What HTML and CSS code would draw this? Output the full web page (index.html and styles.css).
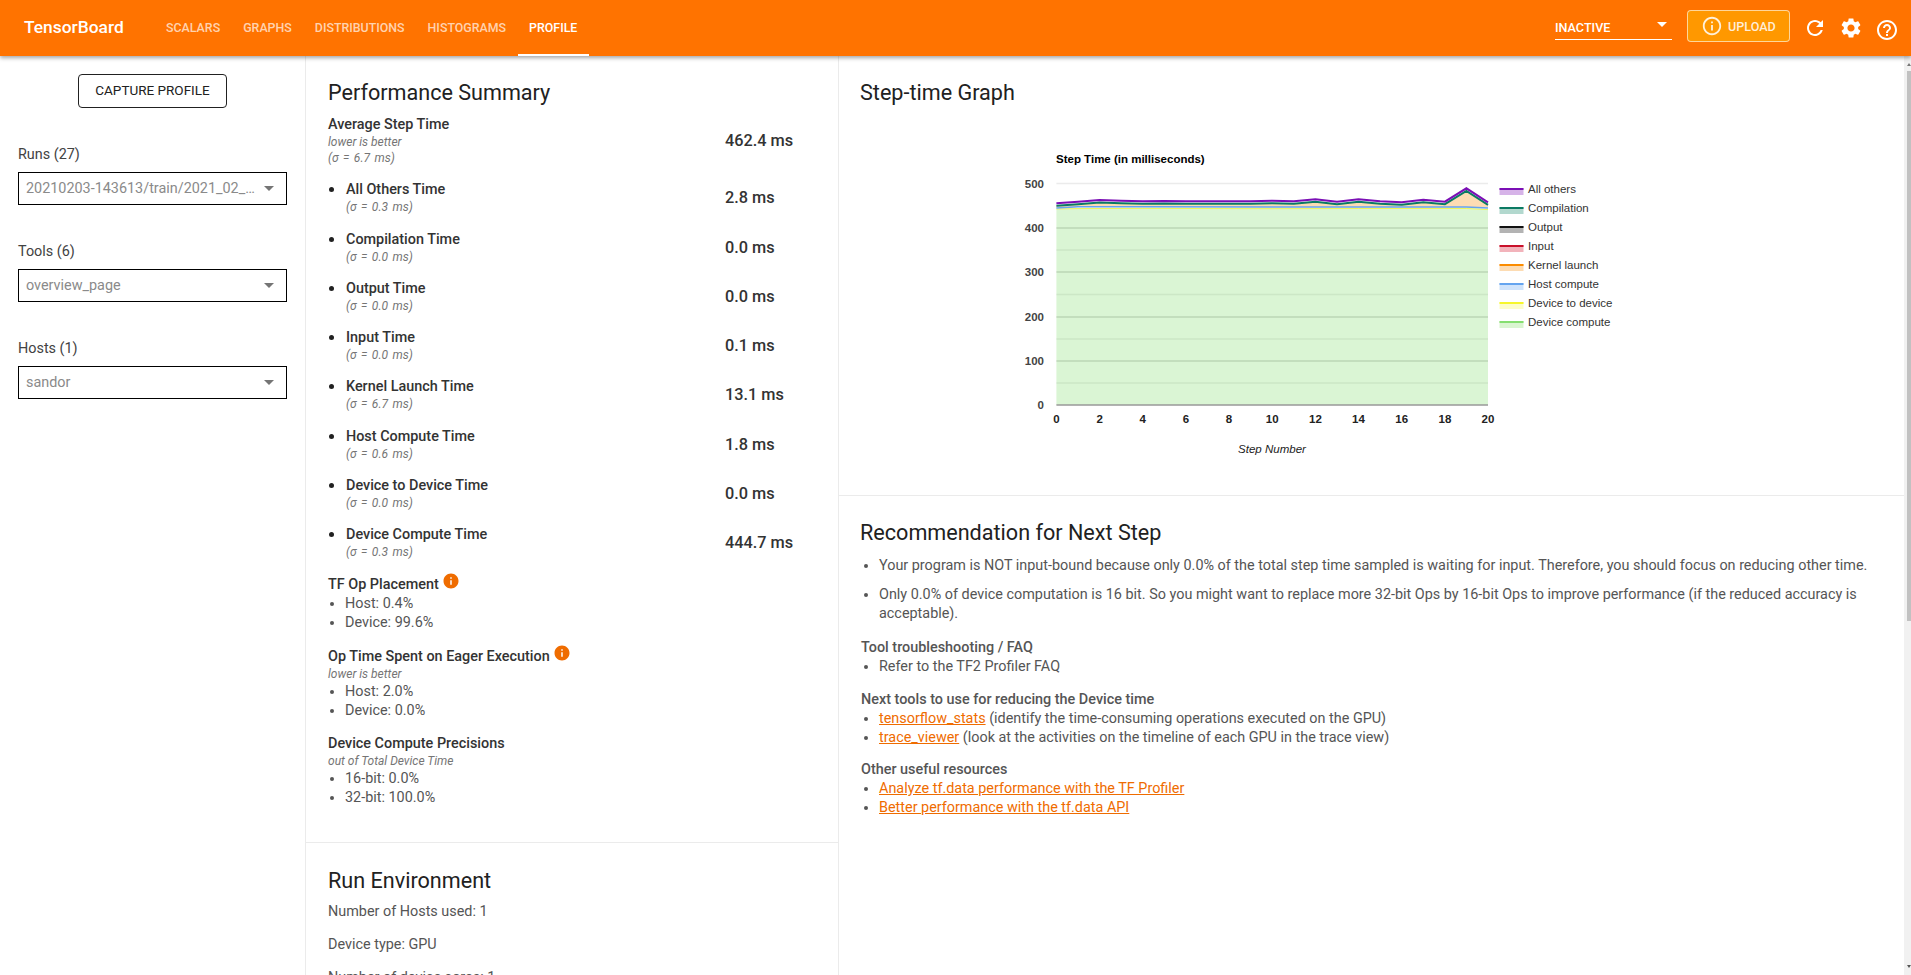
FILE: index.html
```html
<!DOCTYPE html>
<html>
<head>
  <meta charset="UTF-8">
  <title>TensorBoard</title>
  <link rel="stylesheet" href="styles.css">
</head>
<body>
  <!-- Top bar -->
  <header class="topbar">
    <div class="brand">TensorBoard</div>
    <nav class="tabs">
      <a class="tab">Scalars</a>
      <a class="tab">Graphs</a>
      <a class="tab">Distributions</a>
      <a class="tab">Histograms</a>
      <a class="tab active">Profile</a>
    </nav>
    <div class="topbar-right">
      <div class="status-select">
        <span>INACTIVE</span>
        <span class="caret caret-white"></span>
      </div>
      <button class="upload-btn">
        <svg class="icon" viewBox="0 0 24 24"><path d="M11 7h2v2h-2zm0 4h2v6h-2zm1-9C6.48 2 2 6.48 2 12s4.48 10 10 10 10-4.48 10-10S17.52 2 12 2zm0 18c-4.41 0-8-3.59-8-8s3.59-8 8-8 8 3.59 8 8-3.59 8-8 8z"/></svg>
        Upload
      </button>
      <svg class="icon bar-icon" viewBox="0 0 24 24"><path d="M17.65 6.35C16.2 4.9 14.21 4 12 4c-4.42 0-7.99 3.58-7.99 8s3.57 8 7.99 8c3.73 0 6.84-2.55 7.73-6h-2.08c-.82 2.33-3.04 4-5.65 4-3.31 0-6-2.69-6-6s2.69-6 6-6c1.66 0 3.14.69 4.22 1.78L13 11h7V4l-2.35 2.35z"/></svg>
      <svg class="icon bar-icon" viewBox="0 0 24 24"><path d="M19.14 12.94c.04-.3.06-.61.06-.94 0-.32-.02-.64-.07-.94l2.03-1.58c.18-.14.23-.41.12-.61l-1.92-3.32c-.12-.22-.37-.29-.59-.22l-2.39.96c-.5-.38-1.03-.7-1.62-.94l-.36-2.54c-.04-.24-.24-.41-.48-.41h-3.84c-.24 0-.43.17-.47.41l-.36 2.54c-.59.24-1.13.57-1.62.94l-2.39-.96c-.22-.08-.47 0-.59.22L2.74 8.87c-.12.21-.08.47.12.61l2.03 1.58c-.05.3-.09.63-.09.94s.02.64.07.94l-2.03 1.58c-.18.14-.23.41-.12.61l1.92 3.32c.12.22.37.29.59.22l2.39-.96c.5.38 1.03.7 1.62.94l.36 2.54c.05.24.24.41.48.41h3.84c.24 0 .44-.17.47-.41l.36-2.54c.59-.24 1.13-.56 1.62-.94l2.39.96c.22.08.47 0 .59-.22l1.92-3.32c.12-.22.07-.47-.12-.61l-2.01-1.58zM12 15.6c-1.98 0-3.6-1.62-3.6-3.6s1.62-3.6 3.6-3.6 3.6 1.62 3.6 3.6-1.62 3.6-3.6 3.6z"/></svg>
      <svg class="icon bar-icon" viewBox="0 0 24 24"><path d="M11 18h2v-2h-2v2zm1-16C6.48 2 2 6.48 2 12s4.48 10 10 10 10-4.48 10-10S17.52 2 12 2zm0 18c-4.41 0-8-3.59-8-8s3.59-8 8-8 8 3.59 8 8-3.59 8-8 8zm0-14c-2.21 0-4 1.79-4 4h2c0-1.1.9-2 2-2s2 .9 2 2c0 2-3 1.75-3 5h2c0-2.25 3-2.5 3-5 0-2.21-1.79-4-4-4z"/></svg>
    </div>
  </header>

  <div class="layout">
    <!-- Left controls -->
    <aside class="sidebar">
      <button class="capture-btn">Capture Profile</button>
      <div class="field">
        <label>Runs (27)</label>
        <div class="select"><span>20210203-143613/train/2021_02_…</span><span class="caret"></span></div>
      </div>
      <div class="field">
        <label>Tools (6)</label>
        <div class="select"><span>overview_page</span><span class="caret"></span></div>
      </div>
      <div class="field">
        <label>Hosts (1)</label>
        <div class="select"><span>sandor</span><span class="caret"></span></div>
      </div>
    </aside>

    <main class="content">
      <div class="column column-left">
        <!-- Performance summary -->
        <section class="card summary-card">
          <h2>Performance Summary</h2>
          <div class="stat">
            <div>
              <div class="stat-name">Average Step Time</div>
              <div class="note">lower is better</div>
              <div class="note sd">(σ = 6.7 ms)</div>
            </div>
            <div class="stat-value">462.4 ms</div>
          </div>
          <div class="stat sub">
            <div><div class="stat-name">All Others Time</div><div class="note sd">(σ = 0.3 ms)</div></div>
            <div class="stat-value">2.8 ms</div>
          </div>
          <div class="stat sub">
            <div><div class="stat-name">Compilation Time</div><div class="note sd">(σ = 0.0 ms)</div></div>
            <div class="stat-value">0.0 ms</div>
          </div>
          <div class="stat sub">
            <div><div class="stat-name">Output Time</div><div class="note sd">(σ = 0.0 ms)</div></div>
            <div class="stat-value">0.0 ms</div>
          </div>
          <div class="stat sub">
            <div><div class="stat-name">Input Time</div><div class="note sd">(σ = 0.0 ms)</div></div>
            <div class="stat-value">0.1 ms</div>
          </div>
          <div class="stat sub">
            <div><div class="stat-name">Kernel Launch Time</div><div class="note sd">(σ = 6.7 ms)</div></div>
            <div class="stat-value">13.1 ms</div>
          </div>
          <div class="stat sub">
            <div><div class="stat-name">Host Compute Time</div><div class="note sd">(σ = 0.6 ms)</div></div>
            <div class="stat-value">1.8 ms</div>
          </div>
          <div class="stat sub">
            <div><div class="stat-name">Device to Device Time</div><div class="note sd">(σ = 0.0 ms)</div></div>
            <div class="stat-value">0.0 ms</div>
          </div>
          <div class="stat sub">
            <div><div class="stat-name">Device Compute Time</div><div class="note sd">(σ = 0.3 ms)</div></div>
            <div class="stat-value">444.7 ms</div>
          </div>

          <div class="block first-block">
            <div class="stat-name">TF Op Placement
              <svg class="info" viewBox="0 0 24 24"><path d="M12 2C6.48 2 2 6.48 2 12s4.48 10 10 10 10-4.48 10-10S17.52 2 12 2zm1 15h-2v-6h2v6zm0-8h-2V7h2v2z"/></svg>
            </div>
            <ul class="plain">
              <li>Host: 0.4%</li>
              <li>Device: 99.6%</li>
            </ul>
          </div>
          <div class="block">
            <div class="stat-name">Op Time Spent on Eager Execution
              <svg class="info" viewBox="0 0 24 24"><path d="M12 2C6.48 2 2 6.48 2 12s4.48 10 10 10 10-4.48 10-10S17.52 2 12 2zm1 15h-2v-6h2v6zm0-8h-2V7h2v2z"/></svg>
            </div>
            <div class="note">lower is better</div>
            <ul class="plain">
              <li>Host: 2.0%</li>
              <li>Device: 0.0%</li>
            </ul>
          </div>
          <div class="block last-block">
            <div class="stat-name">Device Compute Precisions</div>
            <div class="note">out of Total Device Time</div>
            <ul class="plain">
              <li>16-bit: 0.0%</li>
              <li>32-bit: 100.0%</li>
            </ul>
          </div>
        </section>

        <!-- Run environment -->
        <section class="card env-card">
          <h2>Run Environment</h2>
          <p>Number of Hosts used: 1</p>
          <p>Device type: GPU</p>
          <p>Number of device cores: 1</p>
        </section>
      </div>

      <div class="column column-right">
        <!-- Step-time graph -->
        <section class="card graph-card">
          <h2>Step-time Graph</h2>
          <svg class="chart" viewBox="1020 130 620 330">
            <text class="chart-title" x="1056" y="163">Step Time (in milliseconds)</text>

            <g class="grid-major">
              <line x1="1056.4" x2="1488" y1="228" y2="228"/>
              <line x1="1056.4" x2="1488" y1="272" y2="272"/>
              <line x1="1056.4" x2="1488" y1="317" y2="317"/>
              <line x1="1056.4" x2="1488" y1="361" y2="361"/>
            </g>
            <g class="grid-minor">
              <line x1="1056.4" x2="1488" y1="183.5" y2="183.5"/>
              <line x1="1056.4" x2="1488" y1="250" y2="250"/>
              <line x1="1056.4" x2="1488" y1="294.5" y2="294.5"/>
              <line x1="1056.4" x2="1488" y1="339" y2="339"/>
              <line x1="1056.4" x2="1488" y1="383" y2="383"/>
            </g>

            <!-- stacked areas, bottom to top -->
            <polygon class="area-device" points="1056.4,405 1056.4,208.5 1078,208 1142.7,207.7 1272.2,208 1358.5,207.8 1466.4,207.8 1488,209 1488,405"/>
            <polygon class="area-kernel" points="1056.4,208 1078,207 1488,207.5 1488,205 1466.4,191.5 1444.9,204.5 1423.3,202.5 1401.7,205 1380.1,204 1358.5,202 1337,204.5 1315.4,202 1293.8,204 1272.2,203.5 1250.6,204 1142.7,204 1099.6,203 1078,204.5 1056.4,206"/>

            <polyline class="line-device" points="1056.4,209 1078,208.6 1142.7,208.4 1272.2,208.7 1358.5,208.5 1466.4,208.5 1488,209.6"/>
            <polyline class="line-host" points="1056.4,208 1078,206.8 1142.7,206.8 1272.2,207 1358.5,206.9 1466.4,206.9 1488,208"/>
            <polyline class="line-compile" points="1056.4,205.8 1078,204.2 1099.6,202.6 1121.1,203.2 1142.7,203.8 1164.3,203.5 1185.9,203.8 1250.6,203.8 1272.2,203.2 1293.8,203.8 1315.4,201.8 1337,204.2 1358.5,201.8 1380.1,203.8 1401.7,204.8 1423.3,202.2 1444.9,204.2 1466.4,190.9 1488,204.8"/>
            <polyline class="line-others" points="1056.4,203.3 1078,201.7 1099.6,200 1121.1,200.7 1142.7,201.3 1164.3,201 1185.9,201.3 1250.6,201.3 1272.2,200.7 1293.8,201.3 1315.4,199.3 1337,201.7 1358.5,199.3 1380.1,201.3 1401.7,202.3 1423.3,199.7 1444.9,201.7 1466.4,188.3 1488,202.3"/>
            <line class="axis-base" x1="1056.4" x2="1488" y1="405" y2="405"/>

            <g class="axis-y">
              <text x="1044" y="187.5">500</text>
              <text x="1044" y="232">400</text>
              <text x="1044" y="276">300</text>
              <text x="1044" y="321">200</text>
              <text x="1044" y="365">100</text>
              <text x="1044" y="409">0</text>
            </g>
            <g class="axis-x">
              <text x="1056.4" y="423">0</text>
              <text x="1099.6" y="423">2</text>
              <text x="1142.7" y="423">4</text>
              <text x="1185.9" y="423">6</text>
              <text x="1229" y="423">8</text>
              <text x="1272.2" y="423">10</text>
              <text x="1315.4" y="423">12</text>
              <text x="1358.5" y="423">14</text>
              <text x="1401.7" y="423">16</text>
              <text x="1444.9" y="423">18</text>
              <text x="1488" y="423">20</text>
            </g>
            <text class="axis-label" x="1272" y="453">Step Number</text>

            <!-- legend -->
            <g class="legend">
              <rect x="1499.5" y="188" width="24" height="7" fill="#d6b3e8"/><rect x="1499.5" y="188" width="24" height="2" fill="#7b0fb5"/><text x="1528" y="193">All others</text>
              <rect x="1499.5" y="207" width="24" height="7" fill="#b2d8ce"/><rect x="1499.5" y="207" width="24" height="2" fill="#0b7a63"/><text x="1528" y="212">Compilation</text>
              <rect x="1499.5" y="226" width="24" height="7" fill="#b3b3b3"/><rect x="1499.5" y="226" width="24" height="2" fill="#111"/><text x="1528" y="231">Output</text>
              <rect x="1499.5" y="245" width="24" height="7" fill="#f2b3bb"/><rect x="1499.5" y="245" width="24" height="2" fill="#c9102a"/><text x="1528" y="250">Input</text>
              <rect x="1499.5" y="264" width="24" height="7" fill="#fddcb3"/><rect x="1499.5" y="264" width="24" height="2" fill="#fb8c00"/><text x="1528" y="269">Kernel launch</text>
              <rect x="1499.5" y="283" width="24" height="7" fill="#cfe3fb"/><rect x="1499.5" y="283" width="24" height="2" fill="#64a4ef"/><text x="1528" y="288">Host compute</text>
              <rect x="1499.5" y="302" width="24" height="7" fill="#fdfdc8"/><rect x="1499.5" y="302" width="24" height="2" fill="#f6f62a"/><text x="1528" y="307">Device to device</text>
              <rect x="1499.5" y="321" width="24" height="7" fill="#d9f5d0"/><rect x="1499.5" y="321" width="24" height="2" fill="#84de6f"/><text x="1528" y="326">Device compute</text>
            </g>
          </svg>
        </section>

        <!-- Recommendation -->
        <section class="card rec-card">
          <h2>Recommendation for Next Step</h2>
          <ul class="plain spaced">
            <li>Your program is NOT input-bound because only 0.0% of the total step time sampled is waiting for input. Therefore, you should focus on reducing other time.</li>
            <li>Only 0.0% of device computation is 16 bit. So you might want to replace more 32-bit Ops by 16-bit Ops to improve performance (if the reduced accuracy is acceptable).</li>
          </ul>
          <div class="rec-block first">
            <div class="rec-head">Tool troubleshooting / FAQ</div>
            <ul class="plain">
              <li>Refer to the TF2 Profiler FAQ</li>
            </ul>
          </div>
          <div class="rec-block">
            <div class="rec-head">Next tools to use for reducing the Device time</div>
            <ul class="plain">
              <li><a href="#">tensorflow_stats</a> (identify the time-consuming operations executed on the GPU)</li>
              <li><a href="#">trace_viewer</a> (look at the activities on the timeline of each GPU in the trace view)</li>
            </ul>
          </div>
          <div class="rec-block last">
            <div class="rec-head">Other useful resources</div>
            <ul class="plain">
              <li><a href="#">Analyze tf.data performance with the TF Profiler</a></li>
              <li><a href="#">Better performance with the tf.data API</a></li>
            </ul>
          </div>
        </section>
      </div>
    </main>

    <div class="scrollbar">
      <span class="scroll-arrow"></span>
      <div class="scroll-thumb"></div>
      <span class="scroll-arrow down"></span>
    </div>
  </div>
</body>
</html>
```

FILE: styles.css
```css
* { box-sizing: border-box; }
html, body { height: 100%; }
body { margin: 0; overflow: hidden; font-family: Roboto, Arial, sans-serif; font-size: 14.4px; color: #555; background: #fff; }

/* top bar */
.topbar { position: relative; z-index: 2; display: flex; align-items: center; height: 56px; padding-left: 24px; background: #ff7300; color: #fff; box-shadow: 0 2px 4px rgba(0,0,0,0.35); }
.brand { width: 130.5px; padding-bottom: 2px; font-size: 17.4px; font-weight: 500; }
.tabs { display: flex; height: 56px; }
.tab { display: flex; align-items: center; padding: 0 11.5px 1px; font-size: 12.4px; font-weight: 500; text-transform: uppercase; color: rgba(255,255,255,0.7); }
.tab.active { color: #fff; border-bottom: 2px solid #fff; padding-top: 1px; padding-bottom: 0; }
.topbar-right { display: flex; align-items: center; margin-left: auto; }
.status-select { display: flex; align-items: center; justify-content: space-between; width: 117px; height: 23px; border-bottom: 1px solid #fff; font-size: 12.6px; font-weight: 500; }
.caret { width: 0; height: 0; border-left: 5px solid transparent; border-right: 5px solid transparent; border-top: 5px solid #757575; }
.caret-white { border-top-color: #fff; margin: 0 5px 6px 0; }
.upload-btn { display: flex; align-items: center; gap: 5px; width: 103px; height: 32px; margin: -4px 1px 0 15px; padding: 0 0 0 13px; background: #ff9800; border: 1px solid rgba(255,255,255,0.6); border-radius: 4px; color: rgba(255,255,255,0.85); font-family: inherit; font-size: 12.6px; font-weight: 500; text-transform: uppercase; }
.icon { fill: currentColor; display: block; }
.upload-btn .icon { width: 22px; height: 22px; flex: none; }
.bar-icon { width: 24px; height: 24px; margin-left: 12px; color: #fff; }
.bar-icon:last-child { margin-right: 12px; margin-top: 3px; }

/* page body */
.layout { display: flex; height: calc(100% - 56px); }
.sidebar { flex: none; width: 306px; padding: 18px 18px 0; border-right: 1px solid #ebebeb; }
.capture-btn { display: block; width: 149px; height: 34px; margin: 0 auto; padding: 0 0 2px; background: #fff; border: 1px solid #212121; border-radius: 4px; font-family: inherit; font-size: 13.5px; color: #212121; text-transform: uppercase; }
.field { margin-top: 38px; }
.field label { display: block; margin-bottom: 9px; color: #424242; }
.select { display: flex; align-items: center; justify-content: space-between; width: 269px; height: 33px; padding: 0 12px 0 7px; border: 1px solid #000; color: #8a8a8a; white-space: nowrap; }

.content { flex: 1; min-width: 0; display: flex; align-items: stretch; overflow: hidden; }
.column { flex: 1; min-width: 0; }
.column-left { flex: none; width: 533px; border-right: 1px solid #ebebeb; }
.card { padding: 20px 22px; border-bottom: 1px solid #ebebeb; }
.card h2 { margin: 0 0 5px; font-size: 21.6px; font-weight: 400; line-height: 34px; color: #212121; }
.column-right h2 { margin-left: -1px; }

/* drawn scrollbar, the page itself does not scroll */
.scrollbar { flex: none; display: flex; flex-direction: column; align-items: flex-end; width: 7px; background: #f1f1f1; }
.scroll-arrow { width: 0; height: 0; margin: 7px 0 5px; border-left: 2px solid transparent; border-right: 2px solid transparent; border-bottom: 3px solid #777; }
.scroll-arrow.down { margin: auto 0 7px; border-bottom: none; border-top: 3px solid #555; }
.scroll-thumb { width: 4px; height: 550px; background: #c1c1c1; }

/* summary */
.summary-card { padding-bottom: 35px; }
.stat { display: flex; justify-content: space-between; align-items: center; padding-right: 19px; }
.stat-name { font-weight: 500; line-height: 19px; color: #333; }
.note { font-size: 12px; font-style: italic; line-height: 16px; color: #757575; }
.sd { word-spacing: 1.5px; }
.stat-value { width: 72px; font-size: 16.3px; font-weight: 500; color: #333; }
.sub { position: relative; margin-top: 14.3px; padding-left: 18px; }
.sub::before { content: ""; position: absolute; left: 1px; top: 7px; width: 5px; height: 5px; border-radius: 50%; background: #212121; }
.block { margin-top: 15px; }
.first-block { margin-top: 14.2px; }
.last-block { margin-top: 14px; }
.info { display: inline-block; width: 18px; height: 18px; margin: -6px 0; fill: #ef6c00; vertical-align: 5px; }
ul.plain { margin: 0; padding: 0 0 0 17px; line-height: 19px; }

.env-card { padding-top: 21px; }
.env-card h2 { margin-bottom: 4px; }
.env-card p { margin: 0 0 14px; line-height: 19px; }

/* graph */
.graph-card { height: 440px; }
.chart { display: block; width: 620px; height: 330px; margin: 20px 0 0 159px; font-family: "Liberation Sans", Arial, sans-serif; font-size: 11.5px; }
.chart-title { font-weight: bold; fill: #000; }
.grid-major line { stroke: #d4d4d4; stroke-width: 1.5; }
.grid-minor line { stroke: #ebebeb; stroke-width: 1.5; }
.area-device { fill: #84de6f; fill-opacity: 0.3; }
.area-kernel { fill: #fddcb3; }
polyline { fill: none; }
.line-device { stroke: #f6f62a; stroke-width: 1; stroke-opacity: 0.7; }
.line-host { stroke: #64a4ef; stroke-width: 1.5; }
.line-compile { stroke: #0b7a63; stroke-width: 2; }
.line-others { stroke: #7b0fb5; stroke-width: 2; }
.axis-base { stroke: #999; stroke-width: 1.5; }
.axis-y text { text-anchor: end; font-weight: bold; fill: #444; }
.axis-x text { text-anchor: middle; font-weight: bold; fill: #222; }
.axis-label { text-anchor: middle; font-style: italic; fill: #222; }
.legend text { fill: #333; }

/* recommendation */
.rec-card { border-bottom: none; }
.rec-card h2 { margin-bottom: 0; }
.rec-card ul.plain { padding-left: 18px; }
.rec-card ul.spaced { margin-top: 6px; }
.spaced li { margin-bottom: 10px; }
.rec-block { margin-top: 14px; }
.rec-block.first { margin-top: 15px; }
.rec-block.last { margin-top: 13px; }
.rec-head { font-weight: 500; line-height: 19px; }
a { color: #ef6c00; }
```
